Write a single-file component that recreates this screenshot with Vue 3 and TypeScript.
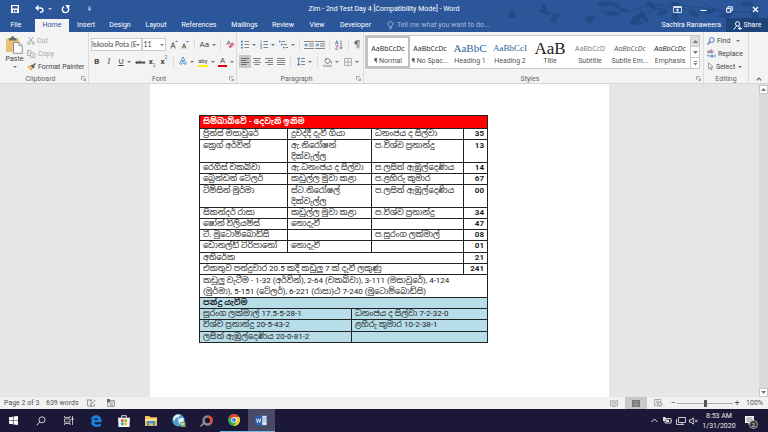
<script setup lang="ts">
interface Glyph { w: number; h: number; body: string }
interface Tool { label: string; icon: string; size: string; arrow?: boolean; on?: boolean; sep?: boolean }
interface ScoreRow { cells: string[]; spans: number[]; kind?: string }

const d = (path: string, stroke = '#555', width = 1) => `<path d="${path}" fill="none" stroke="${stroke}" stroke-width="${width}"/>`

const icons: Record<string, Glyph> = {
  save: { w: 8, h: 8, body: '<path d="M0 0h8v8H0z" fill="#fff"/><path d="M1.4 1h5.2v2.6H1.4zM2 5h4v2.2H2z" fill="#2b579a"/><path d="M3 5.8h1.2v1.6H3z" fill="#fff"/>' },
  undo: { w: 9, h: 8, body: d('M1 3h4.5C9 3 9 7.3 5 7.3', '#fff', 1.3) + d('M3.5 .5L1 3l2.5 2.4', '#fff', 1.2) },
  redo: { w: 9, h: 9, body: d('M3 1.6A3.2 3.2 0 1 0 6.6 2', '#fff', 1.4) + '<path d="M4.5 0h4v1.2L6.8 4.3z" fill="#fff"/>' },
  custom: { w: 5, h: 6, body: d('M1 1h3', '#c9d4e8', .8) + '<path d="M.5 2.6h4l-2 2.4z" fill="#c9d4e8"/>' },
  bulb: { w: 7, h: 9, body: d('M2.4 6V5C-.2 3.2 1.2.6 3.4.6S7 3.2 4.6 5v1zM2.4 7.6h2.2', '#b9c8e2', .8) },
  ribbonOpts: { w: 9, h: 7, body: d('M.5.5h8v6h-8z', '#dfe6f2', .9) + '<path d="M1 1h7v1H1z" fill="#dfe6f2"/>' + d('M4.5 6V3M3 4.3l1.5-1.4L6 4.3', '#fff', .8) },
  minimize: { w: 7, h: 7, body: d('M.5 4.5h6', '#fff', 1) },
  restore: { w: 7, h: 7, body: d('M1.8 2V.8h4.5v3.8H5', '#fff', 1) + d('M.6 2.4h4v3.8h-4z', '#fff', 1) },
  close: { w: 7, h: 7, body: d('M1 1l5 5M6 1L1 6', '#fff', 1.3) },
  person: { w: 9, h: 9, body: d('M4.5.7a2.1 2.1 0 0 1 .2 4.3 2.1 2.1 0 0 1-.2-4.3M.8 8.5L3.4 5.2M5.6 5.2l1 1.2M5 7.5h3.8M6.9 5.6v3.4', '#fff', 1) },
  paste: { w: 17, h: 18, body: '<path d="M0 2.5h13V16H0z" fill="#eac277"/><path d="M2.8 2h2C5-.4 8.300-.4 8.500 2h2v2.600H2.800z" fill="#6c6c6c"/><path d="M7.500 6.500h5.500l3.300 3.200v7.600H7.500z" fill="#fff" stroke="#777" stroke-width=".8"/>' + d('M12.800 6.700v3h3', '#777', .7) },
  cut: { w: 8, h: 8, body: d('M1.500 0L6 5.500M6.500 0L2 5.500', '#aaa', 1) + '<circle cx="1.700" cy="6.300" r="1.200" fill="none" stroke="#aaa" stroke-width=".9"/><circle cx="6.200" cy="6.300" r="1.200" fill="none" stroke="#aaa" stroke-width=".9"/>' },
  copy: { w: 9, h: 8, body: d('M3 5.500H.5v-5h3l1 1M3.500 2.500h3l1.500 1.500v3.500H3.500z', '#aaa', .9) + d('M1.500 2.500h1M4.700 4.500h2M4.700 6h2', '#aaa', .6) },
  painter: { w: 9, h: 8, body: '<path d="M0 3.500l3-1.200 3 3L4.500 8z" fill="#e8b866"/><path d="M3.500 2.500l2-1 2.300 2-1.500 2z" fill="#555"/>' + d('M6.500 2.300L8.500.5', '#555', 1.300) },
  launch: { w: 5, h: 5, body: d('M.5 4V.5H4M2 2l2.300 2.300M4.500 2.300v2.200H2.300', '#888', .7) },
  grow: { w: 8, h: 10, body: d('M.8 8.500L3 2.500l2.300 6M1.500 6.400h3', '#555', .9) + '<path d="M5 2l1.400-1.600L7.800 2z" fill="#3a75b5"/>' },
  shrink: { w: 8, h: 10, body: d('M1.200 8.500L3 3.800l1.900 4.700M1.800 6.900h2.400', '#555', .9) + '<path d="M5 1l1.400 1.600L7.800 1z" fill="#3a75b5"/>' },
  eraser: { w: 9, h: 9, body: d('M.8 5L2.700.8 4.300 4M1.500 3.500h2', '#666', .8) + '<path d="M2.500 6.200L6.300 2l2.200 2.200L5 8H3.400z" fill="#e0788a"/>' },
  outlineA: { w: 8, h: 9, body: d('M1.200 7.500L4 1.200l2.800 6.300M2.200 5.500h3.600', '#4a86c5', 2.200) + d('M1.200 7.500L4 1.200l2.800 6.300M2.200 5.500h3.600', '#f1f6fb', .8) },
  bullets: { w: 8, h: 9, body: d('M3.500 1.500H8M3.500 4.500H8M3.500 7.500H8', '#777', .9) + '<path d="M0 .7h1.700v1.700H0zM0 3.700h1.700v1.700H0zM0 6.700h1.700v1.700H0z" fill="#3a75b5"/>' },
  numbers: { w: 8, h: 9, body: d('M3.500 1.500H8M3.500 4.500H8M3.500 7.500H8', '#777', .9) + d('M1 .3v2.300M.3 3.700H1.700L.5 5.500h1.300M.3 6.500h1.300v2H.3', '#3a75b5', .6) },
  multi: { w: 9, h: 9, body: d('M2.500 1.500H6M4.500 4.500H8M6.500 7.500H9', '#777', .9) + '<path d="M0 .7h1.500v1.500H0zM2 3.700h1.500v1.500H2zM4 6.700h1.500v1.500H4z" fill="#3a75b5"/>' },
  outdent: { w: 10, h: 8, body: d('M0 .5h10M5 2.800h5M5 5h5M0 7.500h10', '#777', .9) + d('M.8 4H4M2.400 2.400L.8 4l1.600 1.600', '#3a75b5', .9) },
  indent: { w: 10, h: 8, body: d('M0 .5h10M5 2.800h5M5 5h5M0 7.500h10', '#777', .9) + d('M.3 4h3.200M2 2.400L3.600 4 2 5.600', '#3a75b5', .9) },
  sort: { w: 8, h: 10, body: d('M.3 4.300L1.800.6l1.500 3.700M.8 3.200h2', '#3a75b5', .8) + d('M.5 5.700h2.700L.5 9.200h2.900', '#9b59a8', .8) + d('M6 .5v8.300M4.600 7.200L6 8.800l1.500-1.600', '#666', .8) },
  pilcrow: { w: 6, h: 9, body: '<path d="M3 .5C-.6.5-.6 4.700 3 4.700z" fill="#666"/>' + d('M2.800.8H6M3.100.8v7.500M4.900.8v7.500', '#666', .8) },
  left: { w: 8, h: 7, body: d('M0 .5h8M0 2.500h5.500M0 4.500h8M0 6.500h5.500', '#666', .9) },
  center: { w: 8, h: 7, body: d('M0 .5h8M1.500 2.500h5M0 4.500h8M1.500 6.500h5', '#777', .9) },
  right: { w: 8, h: 7, body: d('M0 .5h8M2.500 2.500H8M0 4.500h8M2.500 6.500H8', '#777', .9) },
  justify: { w: 8, h: 7, body: d('M0 .5h8M0 2.500h8M0 4.500h8M0 6.500h8', '#777', .9) },
  spacing: { w: 8, h: 9, body: d('M4 1.500h4M4 4.500h4M4 7.500h4', '#777', .9) + d('M1.700.8v7.600M.3 2.300L1.700.8l1.400 1.500M.3 6.900l1.400 1.500 1.400-1.500', '#3a75b5', .9) },
  shade: { w: 9, h: 10, body: d('M1.500 4l3-3L7.500 4l-3 3zM3 3V.8', '#666', .9) + '<path d="M7.400 3.500C9.500 5 9 6.500 8.300 6.800z" fill="#3a75b5"/>' + d('M.5 8.300h8v1.300h-8z', '#999', .7) },
  borders: { w: 8, h: 8, body: d('M.5.5h7v7h-7zM4 .5v7M.5 4h7', '#a0a0a0', .8) },
  find: { w: 8, h: 8, body: '<circle cx="4.800" cy="3" r="2.400" fill="none" stroke="#4d7fb8" stroke-width="1"/>' + d('M3 4.800L.5 7.500', '#4d7fb8', 1.300) },
  replace: { w: 9, h: 9, body: '<circle cx="1.700" cy="2.800" r="1" fill="none" stroke="#666" stroke-width=".8"/><circle cx="5.300" cy="2.800" r="1" fill="none" stroke="#8b5a9c" stroke-width=".8"/>' + d('M2.900 1.700v2.300', '#666', .8) + d('M4.200.2v3.800', '#8b5a9c', .8) + '<circle cx="4.300" cy="7" r="1" fill="none" stroke="#3a75b5" stroke-width=".8"/>' + d('M5.500 5.800v2.500M8.800 6.100c-2.400-.6-2.400 2.400 0 1.900M.8 5.300v1.700h1.600', '#3a75b5', .8) },
  select: { w: 7, h: 9, body: d('M1.500.8v6l1.600-1.300 1 2.500 1-.5-1-2.300 1.900-.2z', '#777', .7) },
  collapse: { w: 6, h: 4, body: d('M.8 3.300L3 1l2.200 2.300', '#666', 1.200) },
  up: { w: 5, h: 3, body: '<path d="M0 3L2.500 0 5 3z" fill="#777"/>' },
  down: { w: 5, h: 3, body: '<path d="M0 0L2.500 3 5 0z" fill="#777"/>' },
  more: { w: 5, h: 5, body: d('M.5.5h4', '#777', .8) + '<path d="M.5 2L2.500 4.500 4.500 2z" fill="#777"/>' },
  proof: { w: 9, h: 8, body: d('M4 1.300L.6.7v6L4 7.400 7.500 6.800V5M4 1.300v6M4 1.300L5.500.8M4.800 5L8.500.8', '#777', .8) },
  macro: { w: 8, h: 8, body: d('M.5 1.500h7v6h-7zM.5 3.200h7M2.500 5h3.500M2.500 6.200h3.500', '#888', .8) + '<path d="M0 0h3v3H0z" fill="#666"/>' },
  read: { w: 8, h: 7, body: d('M4 1.200L.6.6v5.300L4 6.500l3.400-.6V.6zM4 1.200v5.200M1.700 2.500h1.200M1.700 4h1.200M5.200 2.500h1.200M5.200 4h1.200', '#888', .7) },
  print: { w: 8, h: 7, body: '<path d="M0 0h8v7H0z" fill="#777"/>' + d('M1.500 1.500h5M1.500 3h5M1.500 4.500h5M1.500 6h5', '#aaa', .6) },
  web: { w: 9, h: 8, body: d('M4 6.500H.6v-6h6v2.500M2 2.300h3M2 4h2', '#888', .7) + '<circle cx="6" cy="5.300" r="2" fill="#ddd" stroke="#888" stroke-width=".8"/>' },
  windows: { w: 9, h: 9, body: '<path d="M0 1.300l3.900-.6v3.500H0zM4.500.6L9 0v4.200H4.500zM0 4.800h3.900v3.500L0 7.700zM4.500 4.800H9V9l-4.500-.6z" fill="#fff"/>' },
  search: { w: 10, h: 10, body: '<circle cx="6" cy="3.800" r="3" fill="none" stroke="#ddd" stroke-width=".9"/>' + d('M3.800 6L.8 9.200', '#ddd', 1) },
  tasks: { w: 10, h: 9, body: d('M.5 0v1.500h5.500V0M.5 9V7.500h5.500V9M.5 3h5.500v3H.5zM8.500 0v9', '#ddd', .8) + '<path d="M7.600 2h1.800v2H7.600z" fill="#ddd"/>' },
  edge: { w: 12, h: 12, body: '<path d="M.5 5.300C1.300-1.500 11.500-1.500 11.500 6v1.200H4.200c.2 2.600 4 3 6.700 1.400v2.300C6.500 13.300.8 11.500 1.300 6.800 1.500 5 2.700 3.800 4 3.200 2.500 3.400 1.400 4 .5 5.300zM4.300 5H8C8 2.300 4.600 2.300 4.300 5z" fill="#1683dc"/>' },
  store: { w: 12, h: 12, body: d('M3.700 3V.7h4.600V3', '#eee', .9) + '<path d="M0 2.700h12l-.5 9.300H.5z" fill="#f4f4f4"/><path d="M3 4.300h2.600v2.600H3z" fill="#e5502c"/><path d="M6.300 4.300h2.600v2.600H6.300z" fill="#7db82c"/><path d="M3 7.600h2.600v2.600H3z" fill="#1b9fe3"/><path d="M6.300 7.600h2.600v2.600H6.300z" fill="#f8b916"/>' },
  explorer: { w: 12, h: 10, body: '<path d="M0 0h4.500l1 1.200H12V10H0z" fill="#f0bd4c"/><path d="M0 2.500h12V5H0z" fill="#fbdf8f"/><path d="M2 5h8v5H8V7.300H4V10H2z" fill="#3f8fd1"/>' },
  globe: { w: 14, h: 13, body: '<circle cx="6.500" cy="6.300" r="6.200" fill="#4e9fcb"/><path d="M2 2.200C4 .3 7 .2 8.500 1l-2 2.200L3.500 4 2.800 7 .8 5zM6 5l4-1.500 2 1.500-.8 4L8 10.500 6.500 8z" fill="#e3f1f7"/><path d="M8 8h5.500v5H9z" fill="#78ac6b"/><path d="M9 10h3" stroke="#fff"/>' },
  disc: { w: 13, h: 12, body: '<circle cx="7.500" cy="5.500" r="4" fill="none" stroke="#898989" stroke-width="2.400"/><path d="M8 1.500a4 4 0 0 1 2.500 6.600" fill="none" stroke="#e64a32" stroke-width="2.500"/>' + d('M.5 11.500L5 7', '#999', 1.500) },
  chrome: { w: 12, h: 12, body: '<circle cx="6" cy="6" r="6" fill="#35a853"/><path d="M6 6L.8 3A6 6 0 0 1 11.200 3z" fill="#e34234"/><path d="M6 6V3h5.200A6 6 0 0 1 5.600 12L8.600 7.500z" fill="#f9c72f"/><circle cx="6" cy="6" r="2.800" fill="#fff"/><circle cx="6" cy="6" r="2.100" fill="#4385ee"/>' },
  word: { w: 12, h: 11, body: '<path d="M6 1h5.500v9H6z" fill="#f7f9fc" stroke="#8ba8d4" stroke-width=".6"/>' + d('M7.500 3H11M7.500 5H11M7.500 7H11', '#5178b8', .7) + '<path d="M0 1l7.300-1v11L0 10z" fill="#2b5fad"/>' + d('M1.500 3.700l.9 3.800 1.200-3.600 1.200 3.600.9-3.800', '#fff', .8) },
  chevron: { w: 7, h: 5, body: d('M.5 4L3.500 1l3 3', '#ddd', 1) },
  battery: { w: 9, h: 7, body: d('M2 1.500h6v4.500H2z', '#ddd', .9) + '<path d="M3 2.500h3V5H3zM8.300 3H9v1.500h-.7zM0 0h2.500v4H0z" fill="#ddd"/>' },
  network: { w: 10, h: 8, body: d('M2.500.5h7v5h-7zM4 7.500h4M6 5.500v2M.5 2v5.500H4', '#ddd', .9) },
  mute: { w: 9, h: 8, body: d('M.5 2.800H2L4.300.8v6.400L2 5.200H.5zM6 2.700l2.500 2.600M8.500 2.700L6 5.300', '#ddd', .9) },
  note: { w: 9, h: 9, body: '<path d="M0 0h9v7H5.500L3.500 9V7H0z" fill="#f4f4f4"/>' + d('M1.500 2h6M1.500 3.700h6M1.500 5.300h4', '#555', .6) },
}

const tabs = [
  { name: 'Insert', cls: 'w34' }, { name: 'Design', cls: 'w34' }, { name: 'Layout', cls: 'w38' },
  { name: 'References', cls: 'w48' }, { name: 'Mailings', cls: 'w43' }, { name: 'Review', cls: 'w34' },
  { name: 'View', cls: 'w34' }, { name: 'Developer', cls: 'w43' },
]
const paraTop: Tool[] = [
  { label: 'Bullets', icon: 'bullets', size: 't20', arrow: true },
  { label: 'Numbering', icon: 'numbers', size: 't20', arrow: true },
  { label: 'Multilevel list', icon: 'multi', size: 't20', arrow: true },
  { label: 'Decrease indent', icon: 'outdent', size: 't12', sep: true },
  { label: 'Increase indent', icon: 'indent', size: 't12' },
  { label: 'Sort', icon: 'sort', size: 't12', sep: true },
  { label: 'Show marks', icon: 'pilcrow', size: 't12', sep: true },
]
const paraBottom: Tool[] = [
  { label: 'Align left', icon: 'left', size: 't12', on: true },
  { label: 'Center', icon: 'center', size: 't12' },
  { label: 'Align right', icon: 'right', size: 't12' },
  { label: 'Justify', icon: 'justify', size: 't12' },
  { label: 'Line spacing', icon: 'spacing', size: 't20', arrow: true, sep: true },
  { label: 'Shading', icon: 'shade', size: 't20', arrow: true, sep: true },
  { label: 'Borders', icon: 'borders', size: 't20', arrow: true },
]
const styleCards = [
  { sample: 'AaBbCcDc', name: '¶ Normal', cls: 'normal' },
  { sample: 'AaBbCcDc', name: '¶ No Spac...', cls: 'plain' },
  { sample: 'AaBbC', name: 'Heading 1', cls: 'h1' },
  { sample: 'AaBbCcI', name: 'Heading 2', cls: 'h2' },
  { sample: 'AaB', name: 'Title', cls: 'title' },
  { sample: 'AaBbCcD', name: 'Subtitle', cls: 'sub' },
  { sample: 'AaBbCcDc', name: 'Subtle Em...', cls: 'subtle' },
  { sample: 'AaBbCcDc', name: 'Emphasis', cls: 'emph' },
]
const taskApps = ['windows', 'search', 'tasks', 'edge', 'store', 'explorer', 'globe', 'disc', 'chrome', 'word']

const rows: ScoreRow[] = [
  { cells: ['සිම්බාබ්වේ - දෙවැනි ඉනිම'], spans: [5], kind: 'banner' },
  { cells: ['ප්‍රින්ස් මසාවුරේ', 'දුවද්දී දැවී ගියා', 'ධනංජය ද සිල්වා', '35'], spans: [1, 2, 1, 1] },
  { cells: ['ක්‍රෙග් අර්වින්', 'ඇ.නිරෝෂන් දික්වැල්ල', 'ප.විශ්ව ප්‍රනාන්දු', '13'], spans: [1, 2, 1, 1], kind: 'double' },
  { cells: ['රෙගිස් චකබ්වා', 'ඇ.ධනංජය ද සිල්වා', 'ප.ලසිත් ඇඹුල්දෙණිය', '14'], spans: [1, 2, 1, 1] },
  { cells: ['බ්‍රෙන්ඩන් ටේලර්', 'කඩුල්ල මුවා කළා', 'ප.ළහිරු කුමාර', '67'], spans: [1, 2, 1, 1] },
  { cells: ['ටිම්සින් මුර්මා', 'ස්ට.නිරෝෂල් දික්වැල්ල', 'ප.ලසිත් ඇඹුල්දෙණිය', '00'], spans: [1, 2, 1, 1], kind: 'double' },
  { cells: ['සිකන්දර් රාසා', 'කඩුල්ල මුවා කළා', 'ප.විශ්ව ප්‍රනාන්දු', '34'], spans: [1, 2, 1, 1] },
  { cells: ['ෂෝන් විලියම්ස්', 'නොදැවී', '', '47'], spans: [1, 2, 1, 1] },
  { cells: ['ටී. මුටොම්බොඩ්සි', '', 'ප.සුරංග ලක්මාල්', '08'], spans: [1, 2, 1, 1] },
  { cells: ['ඩොනල්ඩ් ටිරිපානෝ', 'නොදැවී', '', '01'], spans: [1, 2, 1, 1], kind: 'roomy' },
  { cells: ['අතිරේක', '21'], spans: [4, 1] },
  { cells: ['එකතුව පන්දුවාර 20.5 කදී කඩුලු 7 ක් දැවී ලකුණු', '241'], spans: [4, 1] },
  { cells: ['කඩුලු වැටීම - 1-32 (අර්වින්), 2-64 (චකබ්වා), 3-111 (මසාවුරේ), 4-124 (මුර්මා), 5-151 (ටේලර්), 6-221 (රාසා)ථ 7-240 (මුටොම්බොඩ්සි)'], spans: [5], kind: 'double wickets' },
  { cells: ['පන්දු යැවීම'], spans: [5], kind: 'blue heading' },
  { cells: ['සුරංග ලක්මාල් 17.5-5-28-1', 'ධනංජය ද සිල්වා 7-2-32-0'], spans: [2, 3], kind: 'blue' },
  { cells: ['විශ්ව ප්‍රනාන්දු 20-5-43-2', 'ළහිරු කුමාර 10-2-38-1'], spans: [2, 3], kind: 'blue roomy' },
  { cells: ['ලසිත් ඇඹුල්දෙණිය 20-0-81-2', ''], spans: [2, 3], kind: 'blue' },
]

const Icon = (props: { name: string }) => {
  const g = icons[props.name]
  return h('svg', { width: g.w, height: g.h, viewBox: `0 0 ${g.w} ${g.h}`, 'aria-hidden': 'true', innerHTML: g.body })
}
Icon.props = ['name']
</script>

<script lang="ts">
import { h } from 'vue'
</script>

<template>
  <div class="app">
    <header class="head">
      <svg class="foliage" width="270" height="32" viewBox="0 0 270 32" aria-hidden="true">
        <g fill="#234a86">
          <path d="M14 8l3 5 2 4-5 1-6-2 4-2zM44 2l4 4 1 5 6 2-4 2-6-1-6-4h5zM53 12l4 2 5 0-3 4-1 6-5-3-1-3 3-1zM89 14l4 2 6-1-4 4-3 6-3-2 0-3-4-2 5-1z" />
          <path d="M98 5q8-6 16-1-8 5-16 1M106 14q8-5 17 0-9 4-17 0M112 2q8 0 11 6-9 0-11-6M120 9q7-3 12 2-7 3-12-2M131 25q3-11 14-12-1 11-14 12M142 11q8 2 9 12-10-3-9-12M134 23q9-3 12 0-6 4-12 0M148 1q8 0 10 8-9-1-10-8M158 15q4-6 12-5-2 7-12 5M171 3q8-3 13 2-8 5-13-2M176 10q6 5 3 13-8-5-3-13M190 11q9-1 12 5-9 3-12-5M206 13q5-6 13-4-4 8-13 4M220 16q8-6 16-1-8 6-16 1M242 4q8-5 15 0-8 6-15 0M252 11q9 1 9 8-9-1-9-8" />
        </g>
        <path d="M105 11q20 3 37-3t63 0 60 4M150 12q20-9 55 0M205 2q10 9 24 11" fill="none" stroke="#234a86" />
      </svg>
      <div class="titlebar">
        <div class="quick">
          <button class="q30" aria-label="Save"><Icon name="save" /></button>
          <button class="q27" aria-label="Undo"><Icon name="undo" /><i class="arrow light"></i></button>
          <button class="q17" aria-label="Redo"><Icon name="redo" /></button>
          <button class="q30" aria-label="Customize toolbar"><Icon name="custom" /></button>
        </div>
        <h1>Zim - 2nd Test Day 4 [Compatibility Mode] - Word</h1>
        <div class="window">
          <button aria-label="Ribbon display options"><Icon name="ribbonOpts" /></button>
          <button aria-label="Minimize"><Icon name="minimize" /></button>
          <button aria-label="Restore"><Icon name="restore" /></button>
          <button aria-label="Close"><Icon name="close" /></button>
        </div>
      </div>
      <nav class="tabs">
        <button class="file">File</button>
        <button class="active">Home</button>
        <button v-for="t in tabs" :key="t.name" :class="t.cls">{{ t.name }}</button>
        <label class="tell"><Icon name="bulb" /><input type="text" aria-label="Tell me" placeholder="Tell me what you want to do..." /></label>
        <span class="user">Sachira Ranaweera</span>
        <button class="share"><Icon name="person" />Share</button>
      </nav>
    </header>

    <section class="ribbon">
      <div class="group clipboard">
        <div class="body">
          <button class="paste"><Icon name="paste" /><span>Paste</span><i class="arrow"></i></button>
          <div class="list">
            <button class="dim"><Icon name="cut" />Cut</button>
            <button class="dim"><Icon name="copy" />Copy</button>
            <button><Icon name="painter" />Format Painter</button>
          </div>
        </div>
        <footer><span>Clipboard</span><Icon name="launch" /></footer>
      </div>

      <div class="group font">
        <div class="body rows">
          <div class="tools">
            <span class="combo family"><select aria-label="Font"><option>Iskoola Pota (E</option></select><i class="arrow"></i></span>
            <span class="combo size"><select aria-label="Font size"><option>11</option></select><i class="arrow"></i></span>
            <button class="t12 first" aria-label="Grow font"><Icon name="grow" /></button>
            <button class="t12" aria-label="Shrink font"><Icon name="shrink" /></button>
            <i class="sep"></i>
            <button class="t20 glyph">Aa<i class="arrow"></i></button>
            <i class="sep"></i>
            <button class="t12" aria-label="Clear formatting"><Icon name="eraser" /></button>
          </div>
          <div class="tools">
            <button class="t12 glyph"><b>B</b></button>
            <button class="t12 glyph serif"><em>I</em></button>
            <button class="t20 glyph"><u>U</u><i class="arrow"></i></button>
            <button class="t12 glyph"><s>abc</s></button>
            <button class="t12 glyph"><b>x</b><sub>2</sub></button>
            <button class="t12 glyph"><b>x</b><sup>2</sup></button>
            <i class="sep"></i>
            <button class="t20" aria-label="Text effects"><Icon name="outlineA" /><i class="arrow"></i></button>
            <button class="t20 glyph"><span class="mark">aby</span><i class="arrow"></i></button>
            <button class="t20 glyph"><span class="ink">A</span><i class="arrow"></i></button>
          </div>
        </div>
        <footer><span>Font</span><Icon name="launch" /></footer>
      </div>

      <div class="group paragraph">
        <div class="body rows">
          <div v-for="(line, n) in [paraTop, paraBottom]" :key="n" class="tools">
            <template v-for="t in line" :key="t.label">
              <i v-if="t.sep" class="sep"></i>
              <button :class="[t.size, { on: t.on }]" :aria-label="t.label"><Icon :name="t.icon" /><i v-if="t.arrow" class="arrow"></i></button>
            </template>
          </div>
        </div>
        <footer><span>Paragraph</span><Icon name="launch" /></footer>
      </div>

      <div class="group styles">
        <div class="body">
          <div class="gallery">
            <button v-for="s in styleCards" :key="s.name" class="card" :class="s.cls"><span class="sample">{{ s.sample }}</span><span class="name">{{ s.name }}</span></button>
            <div class="pager">
              <button aria-label="Previous styles"><Icon name="up" /></button>
              <button aria-label="Next styles"><Icon name="down" /></button>
              <button aria-label="More styles"><Icon name="more" /></button>
            </div>
          </div>
        </div>
        <footer><span>Styles</span><Icon name="launch" /></footer>
      </div>

      <div class="group editing">
        <div class="body">
          <div class="list">
            <button><Icon name="find" />Find<i class="arrow wide"></i></button>
            <button><Icon name="replace" />Replace</button>
            <button><Icon name="select" />Select<i class="arrow"></i></button>
          </div>
        </div>
        <footer><span>Editing</span></footer>
      </div>
      <button class="collapse" aria-label="Collapse ribbon"><Icon name="collapse" /></button>
    </section>

    <main class="workspace">
      <div class="canvas">
        <article class="page">
          <table>
            <colgroup><col class="c1" /><col class="c2" /><col class="c3" /><col class="c4" /><col class="c5" /></colgroup>
            <tbody>
              <tr v-for="(r, i) in rows" :key="i" :class="r.kind">
                <td v-for="(c, j) in r.cells" :key="j" :colspan="r.spans[j]" :class="{ score: j > 0 && j === r.cells.length - 1 && r.spans[j] === 1 }">{{ c }}</td>
              </tr>
            </tbody>
          </table>
        </article>
      </div>
      <div class="scroll">
        <button aria-label="Scroll up"><Icon name="up" /></button>
        <button aria-label="Scroll down"><Icon name="down" /></button>
      </div>
    </main>

    <div class="status">
      <span class="pages">Page 2 of 3</span>
      <span class="words">639 words</span>
      <button class="t24" aria-label="Proofing"><Icon name="proof" /></button>
      <button class="t16" aria-label="Macros"><Icon name="macro" /></button>
      <div class="views">
        <button aria-label="Read mode"><Icon name="read" /></button>
        <button class="on" aria-label="Print layout"><Icon name="print" /></button>
        <button aria-label="Web layout"><Icon name="web" /></button>
      </div>
      <button class="zoomstep">−</button>
      <input type="range" min="0" max="100" value="50" aria-label="Zoom" />
      <button class="zoomstep">+</button>
      <span class="percent">100%</span>
    </div>

    <footer class="taskbar">
      <div class="apps">
        <button v-for="a in taskApps" :key="a" :class="a" :aria-label="a"><Icon :name="a" /></button>
      </div>
      <div class="tray">
        <button aria-label="Hidden icons"><Icon name="chevron" /></button>
        <button aria-label="Battery"><Icon name="battery" /></button>
        <button aria-label="Network"><Icon name="network" /></button>
        <button aria-label="Volume"><Icon name="mute" /></button>
      </div>
      <time class="clock"><span>8:53 AM</span><span>1/31/2020</span></time>
      <button class="notes" aria-label="Notifications"><Icon name="note" /><span class="badge">2</span></button>
    </footer>
  </div>
</template>

<style>
body { margin: 0; }
</style>

<style scoped>
* { box-sizing: border-box; }
.app { display: flex; flex-direction: column; min-height: 100vh; font: 7px/10px Roboto, "Open Sans", sans-serif; color: #444; background: #e6e6e6; }
button { display: flex; align-items: center; justify-content: center; padding: 0; border: 0; background: none; font: inherit; color: inherit; white-space: nowrap; }
svg { display: block; flex: none; }
.arrow { flex: none; width: 0; height: 0; border: 2px solid transparent; border-top-color: #777; border-bottom: 0; margin-left: 3px; }
.arrow.light { border-top-color: #c9d4e8; margin-left: 4px; }

.head { position: relative; background: #2b579a; color: #fff; }
.foliage { position: absolute; top: 0; right: 0; }
.titlebar { position: relative; display: grid; grid-template-columns: 1fr auto 1fr; align-items: center; height: 18px; }
.quick { display: flex; }
.q30 { width: 30px; }
.q27 { width: 27px; }
.q17 { width: 17px; }
h1 { margin: 0; font-size: 7px; font-weight: 400; line-height: 10px; }
.window { display: flex; justify-content: flex-end; }
.window button { width: 26px; }
.tabs { position: relative; display: flex; height: 14px; }
.tabs .file { width: 35px; padding-right: 3px; }
.tabs .active { width: 34px; margin-top: 1px; padding-bottom: 1px; background: #f3f3f3; color: #2b579a; }
.w34 { width: 34px; }
.w38 { width: 38px; }
.w43 { width: 43px; }
.w48 { width: 48px; }
.tell { display: flex; flex: 1; align-items: center; gap: 3px; padding-left: 10px; }
.tell input { flex: 1; min-width: 0; padding: 0; border: 0; background: none; color: #fff; font: inherit; outline: 0; }
.tell input::placeholder { color: #a9bbdb; opacity: 1; }
.user { padding-right: 5px; line-height: 14px; }
.tabs .share { gap: 2px; width: 42px; background: #1e4379; }

.ribbon { display: flex; height: 52px; background: #f3f3f3; border-bottom: 1px solid #d5d5d5; }
.group { display: flex; flex-direction: column; border-right: 1px solid #dcdcdc; }
.group .body { flex: 1; display: flex; }
.group footer { display: flex; align-items: center; height: 9px; color: #666; }
.group footer span { flex: 1; text-align: center; }
.group footer svg { margin-right: 2px; }
.clipboard { width: 89px; }
.paste { flex-direction: column; justify-content: flex-start; width: 27px; padding: 4px 0 0 2px; }
.paste .arrow { margin: 2px 0 0; }
.list { display: flex; flex-direction: column; padding-top: 2px; }
.list button { justify-content: flex-start; height: 13px; gap: 2px; }
.list .arrow { margin-left: 1px; }
.list .arrow.wide { margin-left: 4px; }
.dim { color: #a6a6a6; }
.font { width: 148px; }
.paragraph { width: 127px; }
.body.rows { flex-direction: column; gap: 4px; padding: 6px 0 0 2px; }
.tools { display: flex; align-items: center; height: 13px; }
.t12 { width: 12px; height: 13px; }
.t20 { width: 20px; height: 13px; }
.sep { width: 1px; height: 11px; margin: 0 3px; background: #ddd; }
.on { background: #c8c8c8; }
.combo { position: relative; display: flex; align-items: center; height: 13px; border: 1px solid #ccc; background: #fff; }
.combo select { width: 100%; padding: 0; border: 0; appearance: none; background: none; font: 7px/11px Lato, sans-serif; color: #444; }
.combo .arrow { position: absolute; right: 1px; }
.family { width: 53px; }
.size { width: 24px; }
.first { margin-left: 2px; }
.glyph { font-size: 8px; color: #444; }
.serif { font-family: "Liberation Serif", serif; }
.glyph s { font-size: 6px; }
.glyph sub, .glyph sup { font-size: 5px; line-height: 5px; color: #3a75b5; }
.glyph sub { align-self: flex-end; }
.glyph sup { align-self: flex-start; }
.mark { border-bottom: 2px solid #ffef00; font-size: 6px; line-height: 9px; }
.ink { width: 9px; border-bottom: 2px solid #e00000; line-height: 9px; }

.styles { flex: 1; }
.styles .body { padding: 3px 3px 0 1px; }
.gallery { display: flex; flex: 1; height: 34px; border: 1px solid #c8c8c8; background: #fff; }
.card { flex: 1 1 0; min-width: 0; flex-direction: column; padding-top: 2px; border: 2px solid transparent; border-width: 2px 0; }
.card.normal { border: 2px solid #c0c0c0; }
.sample { height: 17px; font: 7px/17px "Open Sans", sans-serif; color: #222; }
.name { line-height: 9px; color: #555; }
.h1 .sample { font: 11px/17px "Liberation Serif", serif; color: #2e6099; }
.h2 .sample { font: 9px/17px "Liberation Serif", serif; color: #2e6099; }
.title .sample { font: 17px/17px "Liberation Serif", serif; }
.sub .sample { color: #777; }
.subtle .sample { font-style: italic; color: #555; }
.emph .sample { font-style: italic; }
.pager { display: flex; flex-direction: column; width: 9px; border-left: 1px solid #ccc; }
.pager button { flex: 1; }
.pager button + button { border-top: 1px solid #ccc; }
.pager button:first-child { background: #ddd; }
.editing { width: 45px; }
.editing .list { padding-left: 3px; }
.collapse { align-self: flex-end; width: 19px; height: 9px; }

.workspace { display: flex; flex: 1; min-height: 313px; }
.canvas { flex: 1; display: flex; justify-content: center; }
.page { width: 459px; padding: 31px 121px 0 49px; background: #fff; }
table { width: 288px; border-collapse: collapse; table-layout: fixed; color: #222; font: 8px/10px Roboto, "Noto Sans Sinhala", "Iskoola Pota", sans-serif; }
.c1 { width: 88px; }
.c2 { width: 64px; }
.c3 { width: 20px; }
.c4 { width: 92px; }
.c5 { width: 24px; }
tr { height: 11px; }
td { padding: 0 3px; border: 1px solid #222; vertical-align: top; }
tr.banner { height: 13px; }
.banner td { background: #f00; color: #fff; font-weight: 700; line-height: 12px; }
.double td { height: 23px; line-height: 11px; }
.wickets td { padding-right: 24px; }
tr.roomy { height: 12px; }
.blue td { background: #b7dde8; }
.heading td, td.score { font-weight: 700; }
td.score { text-align: right; }

.scroll { display: flex; flex-direction: column; justify-content: space-between; width: 9px; padding-top: 1px; background: #dadada; }
.scroll button { height: 9px; border: 1px solid #c6c6c6; background: #fff; }

.status { display: flex; align-items: center; height: 12px; background: #f1f1f1; color: #555; }
.pages { width: 43px; padding-left: 4px; }
.words { width: 36px; padding-left: 3px; }
.t24 { width: 24px; }
.t16 { width: 16px; }
.views { display: flex; height: 12px; margin-left: auto; }
.views button { width: 22px; }
.zoomstep { width: 8px; font-size: 9px; }
.status input { width: 56px; height: 9px; margin: 0; appearance: none; background: linear-gradient(#aaa, #aaa) center / 100% 1px no-repeat; }
.status input::-webkit-slider-thumb { appearance: none; width: 3px; height: 7px; background: #555; }
.percent { width: 27px; padding-right: 5px; text-align: right; }

.taskbar { display: flex; height: 23px; background: #1c1838; color: #eee; }
.apps { display: grid; grid-template-columns: repeat(10, 1fr); width: 275px; }
.apps .word { background: #4a4966; }
.apps .chrome, .apps .word { border-bottom: 1px solid #76b9ed; }
.tray { display: flex; margin-left: auto; }
.tray button { width: 13px; }
.clock { display: flex; flex-direction: column; justify-content: center; width: 36px; padding-left: 2px; text-align: center; }
.notes { position: relative; width: 32px; padding-right: 5px; }
.badge { position: absolute; left: 13px; top: 11px; width: 9px; height: 9px; border: 1px solid #aaa; border-radius: 50%; background: #333; font-size: 6px; line-height: 7px; }
</style>
